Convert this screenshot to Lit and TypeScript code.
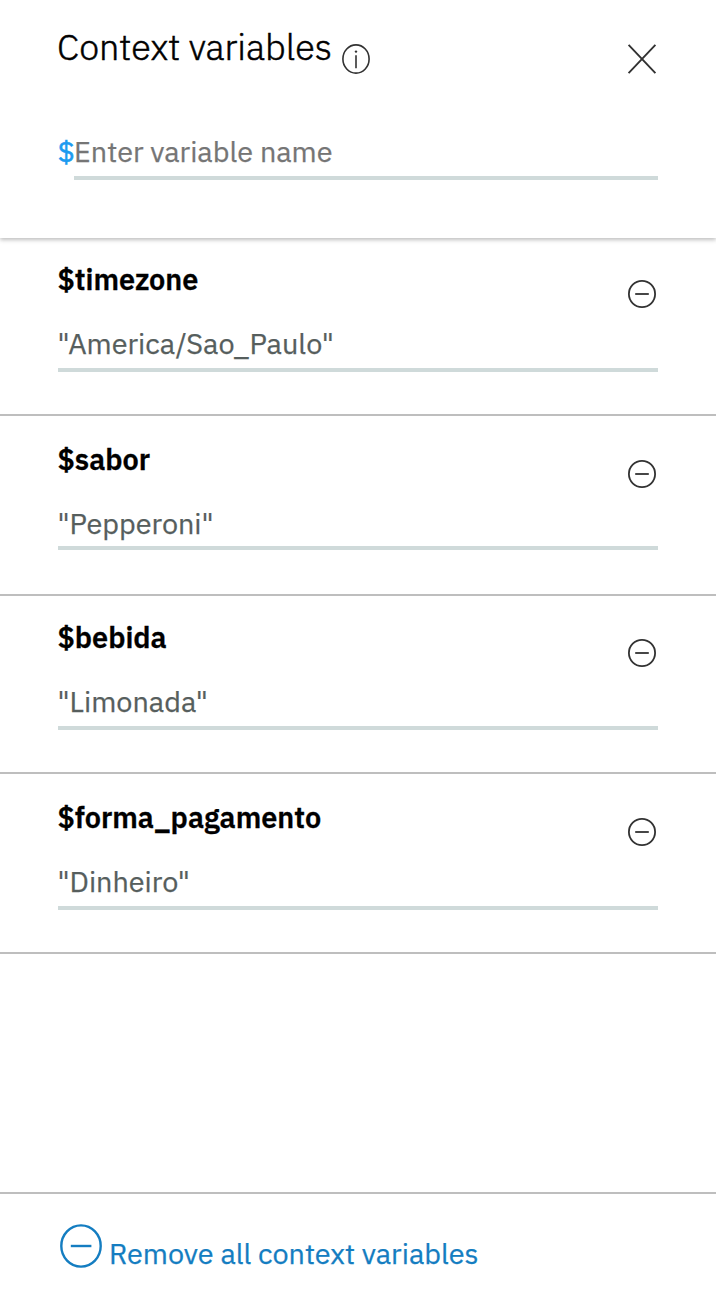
import { LitElement, html, css } from "lit";
import { customElement, property } from "lit/decorators.js";

interface ContextVariable {
  name: string;
  value: string;
}

const variables: ContextVariable[] = [
  { name: "timezone", value: '"America/Sao_Paulo"' },
  { name: "sabor", value: '"Pepperoni"' },
  { name: "bebida", value: '"Limonada"' },
  { name: "forma_pagamento", value: '"Dinheiro"' },
];

@customElement("variable-row")
export class VariableRow extends LitElement {
  static styles = css`
    :host {
      display: flex;
      box-sizing: border-box;
      height: 178px;
      padding: 21px 58px 0;
      border-bottom: 2px solid #bebebe;
      position: relative;
    }
    .body {
      flex: 1;
    }
    .name {
      margin-left: -0.5px;
      font-weight: 600;
      color: #000;
      -webkit-text-stroke: 0.3px currentColor;
    }
    .value {
      box-sizing: border-box;
      height: 49px;
      margin-top: 24px;
      border-bottom: 4px solid #cfdada;
      color: #565e5d;
    }
    .value.short {
      height: 47px;
    }
    .text {
      margin-left: -0.5px;
    }
    .remove {
      position: absolute;
      top: 42px;
      right: 60px;
      width: 28px;
      height: 28px;
      color: #323232;
    }
    :host(.tall) {
      height: 180px;
      padding-top: 23px;
    }
    :host(.tall) .remove {
      top: 44px;
    }
    :host(.low) .remove {
      top: 43px;
    }
  `;

  @property() name = "";
  @property() value = "";
  @property({ type: Boolean }) short = false;

  render() {
    return html`
      <div class="body">
        <div class="name">$${this.name}</div>
        <div class="value ${this.short ? "short" : ""}"><div class="text">${this.value}</div></div>
      </div>
      <svg class="remove" viewBox="0 0 28 28" fill="none" stroke="currentColor" stroke-width="1.8">
        <circle cx="14" cy="14" r="13.1" />
        <path d="M7.2 14h13.6" />
      </svg>
    `;
  }
}

@customElement("app-root")
export class AppRoot extends LitElement {
  static styles = css`
    :host {
      display: flex;
      flex-direction: column;
      box-sizing: border-box;
      height: 1298px;
      overflow: hidden;
      background: #fff;
      color: #000;
      font: 28.8px/40px "IBM Plex Sans", Roboto, sans-serif;
      -webkit-text-stroke: 0.25px currentColor;
    }
    svg {
      display: block;
      flex: none;
    }
    .header {
      flex: none;
      box-sizing: border-box;
      height: 238px;
      padding: 24px 58px 0;
      box-shadow: 0 2px 4px rgba(0, 0, 0, 0.25);
      position: relative;
    }
    .bar {
      display: flex;
      align-items: flex-start;
      height: 98px;
    }
    .title {
      margin: -1px 0 0 -1px;
      font-weight: 300;
      font-size: 36px;
      line-height: 48px;
      -webkit-text-stroke: 0.5px currentColor;
    }
    .info {
      width: 28px;
      height: 30px;
      margin: 20px auto 0 10px;
      color: #323232;
    }
    .close {
      width: 30px;
      height: 30px;
      margin: 20px 1px 0 0;
      color: #323232;
    }
    .search {
      display: flex;
      height: 58px;
    }
    .prefix {
      width: 16px;
      padding-top: 9px;
      color: #1d9bf0;
      text-indent: -0.5px;
      -webkit-text-stroke: 0.5px currentColor;
    }
    .input {
      flex: 1;
      padding-top: 9px;
      border-bottom: 4px solid #cfdada;
      color: #757575;
      white-space: nowrap;
    }
    .list {
      flex: 1;
    }
    .footer {
      flex: none;
      box-sizing: border-box;
      display: flex;
      height: 106px;
      padding: 30px 60px 0;
      border-top: 2px solid #bebebe;
      color: #147dc1;
    }
    .clear {
      width: 42px;
      height: 44px;
    }
    .label {
      margin: 9px 0 0 7px;
      white-space: nowrap;
    }
  `;

  render() {
    return html`
      <header class="header">
        <div class="bar">
          <div class="title">Context variables</div>
          <svg class="info" viewBox="0 0 28 30" fill="none" stroke="currentColor" stroke-width="1.6">
            <ellipse cx="14" cy="15" rx="13.1" ry="14.1" />
            <path d="M14 11.3v13" />
            <circle cx="14" cy="7.6" r="1.2" fill="currentColor" stroke="none" />
          </svg>
          <svg class="close" viewBox="0 0 30 30" fill="none" stroke="currentColor" stroke-width="1.9">
            <path d="M1.6 .8 28.4 29.2M28.4 .8 1.6 29.2" />
          </svg>
        </div>
        <div class="search">
          <span class="prefix">$</span>
          <div class="input">Enter variable name</div>
        </div>
      </header>
      <main class="list">
        ${variables.map(
          (v, i) => html`<variable-row
            class=${i % 2 ? "tall" : i === 2 ? "low" : ""}
            .name=${v.name}
            .value=${v.value}
            .short=${i === 1}
          ></variable-row>`
        )}
      </main>
      <footer class="footer">
        <svg class="clear" viewBox="0 0 42 44" fill="none" stroke="currentColor" stroke-width="2.4">
          <ellipse cx="21" cy="22" rx="19.7" ry="20.6" />
          <path d="M10.8 22h20.6" />
        </svg>
        <span class="label">Remove all context variables</span>
      </footer>
    `;
  }
}
